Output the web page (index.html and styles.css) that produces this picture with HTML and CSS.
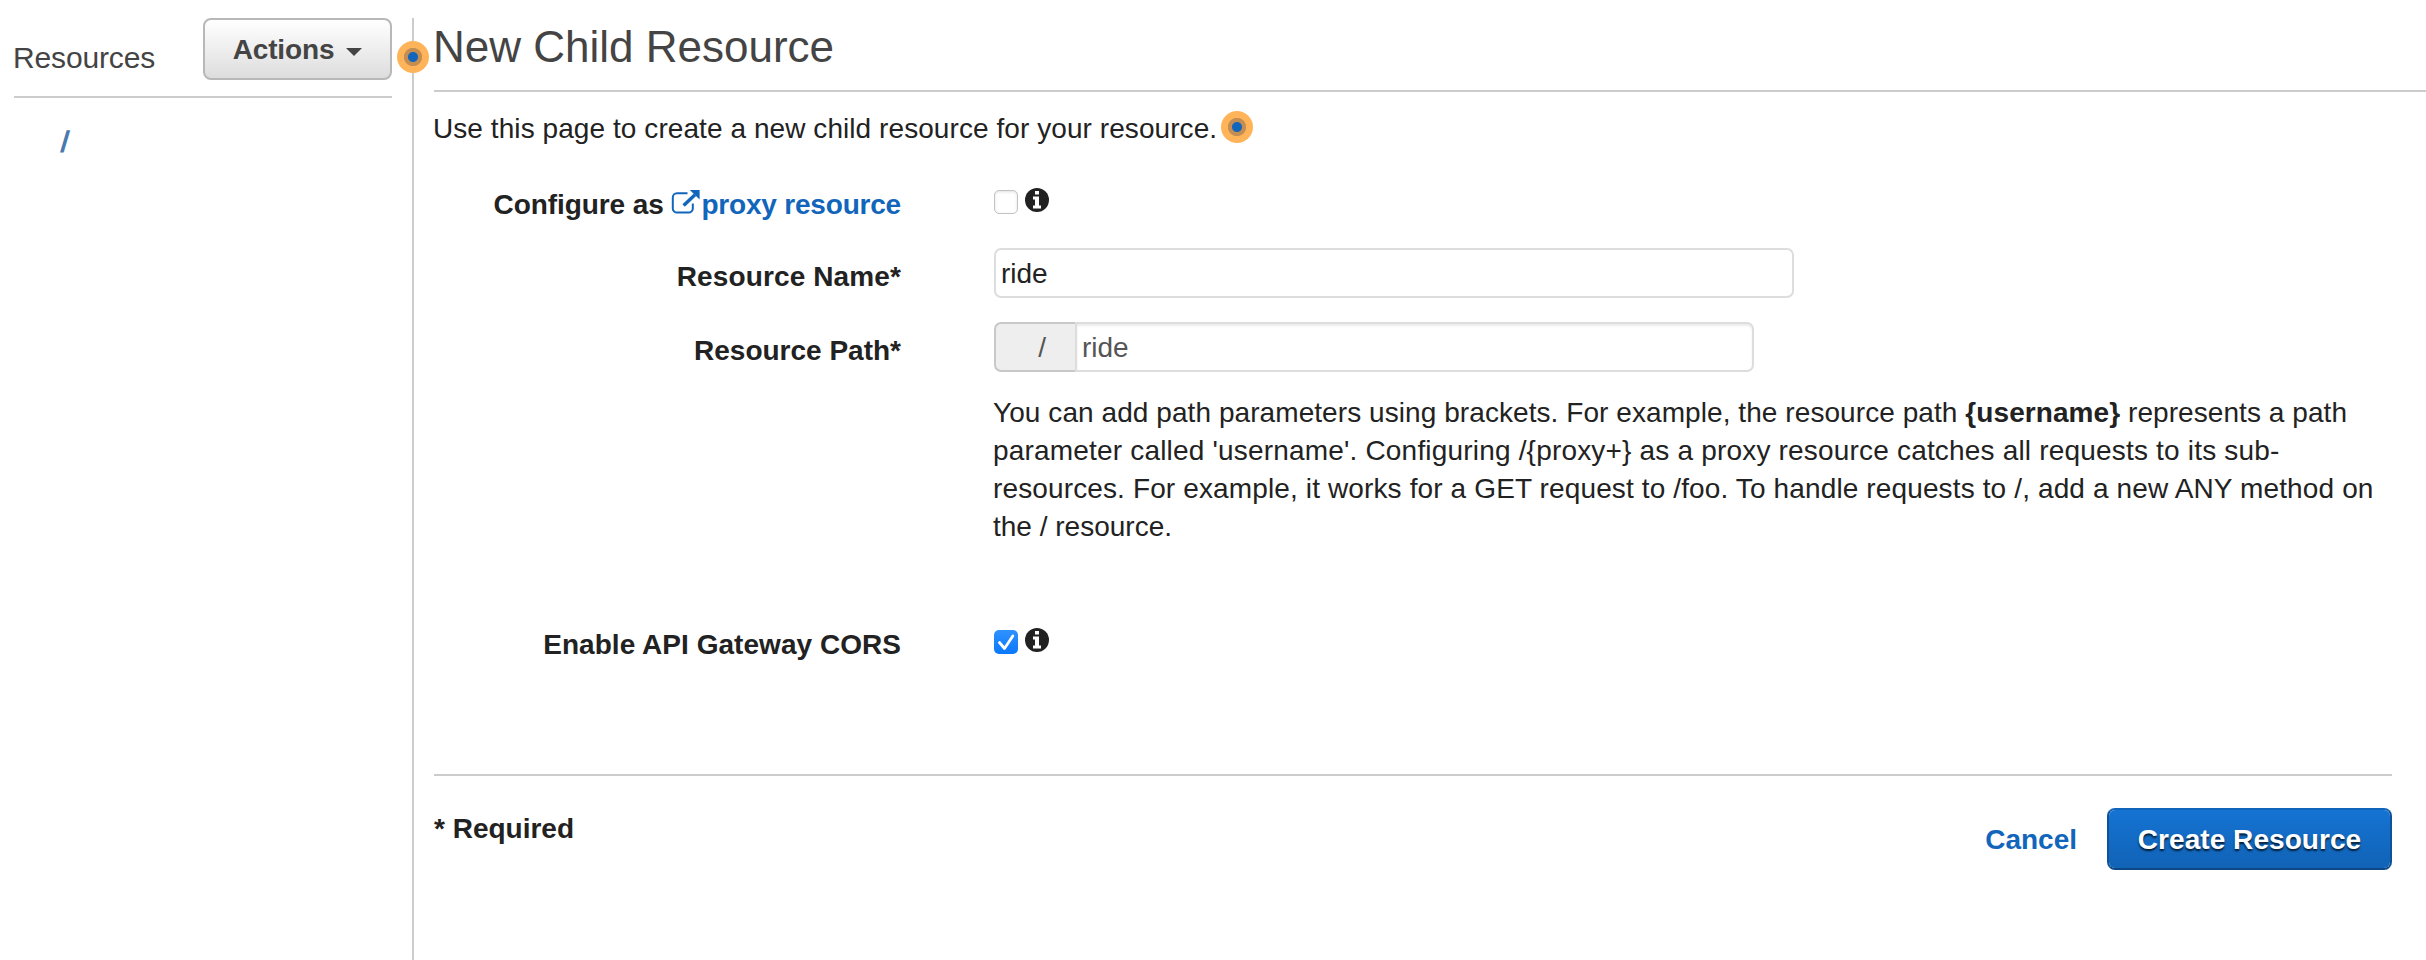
FILE: index.html
```html
<!DOCTYPE html>
<html lang="en">
<head>
<meta charset="utf-8">
<title>New Child Resource</title>
<link rel="stylesheet" href="styles.css">
</head>
<body>
<div class="layout">
  <aside class="sidebar">
    <div class="sidebar-head">
      <span class="sidebar-title">Resources</span>
      <button class="btn btn-actions" type="button">Actions<svg class="caret" viewBox="0 0 16 8"><path d="M0 0h16L8 8z"/></svg></button>
    </div>
    <a class="tree-root">/</a>
  </aside>
  <main class="main">
    <span class="hint hint-divider"></span>
    <h1 class="title">New Child Resource</h1>
    <p class="intro"><span>Use this page to create a new child resource for your resource.</span><span class="hint"></span></p>
    <form class="form">
      <div class="row row-proxy">
        <label class="label">Configure as <a class="link"><svg class="external" viewBox="0 0 29 24"><path d="M16.5 3.2H6A4.2 4.2 0 0 0 1.8 7.4V18.4A4.2 4.2 0 0 0 6 22.6H17.6A4.2 4.2 0 0 0 21.8 18.4V13.5" fill="none" stroke="currentColor" stroke-width="2"/><path d="M12.6 15.6L24 4.8" stroke="currentColor" stroke-width="3.4" fill="none"/><path d="M18.8 0H28.6V9.4z" fill="currentColor"/></svg>proxy resource</a></label>
        <div class="checks">
          <span class="checkbox"></span>
          <svg class="info" viewBox="0 0 24 24"><circle cx="12" cy="12" r="12"/><path d="M10 3h4v3.5h-4zM8 8.5h6v9h2V20.5H8v-3h2v-6H8z" fill="#fff"/></svg>
        </div>
      </div>
      <div class="row row-name">
        <label class="label">Resource Name*</label>
        <div class="field">ride</div>
      </div>
      <div class="row row-path">
        <label class="label">Resource Path*</label>
        <div class="group"><span class="addon">/</span><span class="field field-path">ride</span></div>
      </div>
      <p class="help"><span class="line line-1">You can add path parameters using brackets. For example, the resource path <b>{username}</b> represents a path</span> <span class="line line-2">parameter called 'username'. Configuring /{proxy+} as a proxy resource catches all requests to its sub-</span><span class="line line-3">resources. For example, it works for a GET request to /foo. To handle requests to /, add a new ANY method on</span> <span class="line">the / resource.</span></p>
      <div class="row row-cors">
        <label class="label">Enable API Gateway CORS</label>
        <div class="checks">
          <span class="checkbox checked"><svg viewBox="0 0 24 24"><path d="M5.5 12.5L10.5 18.5L18.8 6" fill="none" stroke="#fff" stroke-width="2.8" stroke-linecap="round" stroke-linejoin="round"/></svg></span>
          <svg class="info" viewBox="0 0 24 24"><circle cx="12" cy="12" r="12"/><path d="M10 3h4v3.5h-4zM8 8.5h6v9h2V20.5H8v-3h2v-6H8z" fill="#fff"/></svg>
        </div>
      </div>
    </form>
    <footer class="footer">
      <b class="required">* Required</b>
      <div class="buttons"><a class="link cancel">Cancel</a><button class="btn btn-primary" type="button">Create Resource</button></div>
    </footer>
  </main>
</div>
</body>
</html>
```
FILE: styles.css
```css
* { box-sizing: border-box; }
body {
  margin: 0;
  background: #fff;
  color: #222;
  font: 28px/38px "Liberation Sans", Arial, Helvetica, sans-serif;
  overflow: hidden;
}
.layout { display: flex; height: 960px; padding-top: 18px; }

.sidebar { width: 412px; padding: 0 20px 0 13px; flex: none; }
.sidebar-head {
  display: flex;
  justify-content: space-between;
  align-items: flex-start;
  height: 80px;
  margin-left: 1px;
  border-bottom: 2px solid #ccc;
}
.sidebar-title { margin-left: -1px; padding-top: 21px; font-size: 30px; letter-spacing: -.15px; color: #444; }
.tree-root {
  display: block;
  width: 60px;
  padding: 25px 0 0 49px;
  font-size: 30px;
  font-weight: bold;
  color: #4a7aad;
  transform: skewX(-6deg);
}

.btn {
  display: flex;
  align-items: center;
  justify-content: center;
  height: 62px;
  padding: 2px 0 0;
  border: 2px solid #b8b8b8;
  border-radius: 8px;
  font: bold 28px/38px "Liberation Sans", Arial, sans-serif;
}
.btn-actions {
  width: 189px;
  gap: 12px;
  color: #444;
  letter-spacing: -.15px;
  background: linear-gradient(#fff, #ddd);
}
.caret { width: 16px; height: 8px; fill: #444; margin-top: 4px; }
.btn-primary {
  width: 285px;
  color: #fff;
  border-color: #1166bb #0e529a #0c4787;
  letter-spacing: .06px;
  background: linear-gradient(#1573d3, #1163b6) padding-box;
  text-shadow: 0 2px 2px rgba(0, 0, 0, .75);
}

.main { position: relative; flex: 1; border-left: 2px solid #ccc; padding-left: 20px; }
.hint {
  flex: none;
  width: 32px;
  height: 32px;
  border-radius: 50%;
  background: radial-gradient(circle, #1166bb 0 4.5px, #c48d52 5.5px 8.7px, #ffb459 9.5px);
}
.hint-divider { position: absolute; left: -17px; top: 23px; }
.title {
  margin: 0;
  height: 74px;
  padding-top: 4px;
  border-bottom: 2px solid #ccc;
  color: #444;
  font-size: 44px;
  font-weight: normal;
  line-height: 50px;
  text-indent: -1px;
}
.intro { display: flex; gap: 4px; margin: 18px 0 0 -1px; letter-spacing: .07px; }
.intro .hint { margin-top: 1px; }

.form { height: 626px; padding-top: 37px; }
.row { display: grid; grid-template-columns: 467px 1fr; column-gap: 93px; align-items: start; }
.label { font-weight: bold; text-align: right; white-space: nowrap; }
.link { color: #1166bb; }
.external { width: 29px; height: 24px; margin-right: 1px; }
.checks { display: flex; gap: 7px; padding-top: 3px; }
.checkbox {
  width: 24px;
  height: 24px;
  margin-top: 2px;
  border: 1px solid #c3c3c3;
  border-radius: 5px;
  box-shadow: inset 0 1px 3px rgba(0, 0, 0, .12);
}
.checked { border: 0; background: linear-gradient(#2f92ff, #0a78fb); box-shadow: none; }
.checked svg { display: block; width: 24px; height: 24px; }
.info { width: 24px; height: 24px; fill: #222; }

.row-proxy .label, .row-cors .label { padding-top: 1px; }
.row-proxy .label { letter-spacing: -.08px; }
.row-proxy .link { letter-spacing: -.2px; }
.row-name { margin-top: 24px; }
.row-name .label { letter-spacing: .12px; }
.row-path { margin-top: 24px; }
.row-name .label, .row-path .label { padding-top: 10px; }
.field {
  width: 800px;
  height: 50px;
  padding: 5px 5px 3px;
  border: 2px solid #ddd;
  border-radius: 7px;
}
.group { display: flex; width: 760px; color: #555; }
.addon {
  width: 81px;
  height: 50px;
  padding: 5px 29px 0 0;
  text-align: right;
  border: 2px solid #c8c8c8;
  border-right: 0;
  border-radius: 7px 0 0 7px;
  background: #eee;
}
.field-path { flex: 1; border-radius: 0 7px 7px 0; box-shadow: inset 0 2px 2px rgba(0, 0, 0, .08); }
.help { margin: 22px 0 0 559px; }
.line { display: block; white-space: nowrap; }
.line-1 { letter-spacing: .07px; }
.line-2 { letter-spacing: .185px; }
.line-3 { letter-spacing: .13px; }
.row-cors { margin-top: 79px; }
.row-cors .label { letter-spacing: .04px; }

.footer {
  display: flex;
  justify-content: space-between;
  align-items: flex-start;
  margin-right: 34px;
  padding-top: 32px;
  border-top: 2px solid #ccc;
}
.required { padding-top: 2px; }
.buttons { display: flex; align-items: center; gap: 30px; }
.cancel { padding-top: 2px; font-weight: bold; }
```
